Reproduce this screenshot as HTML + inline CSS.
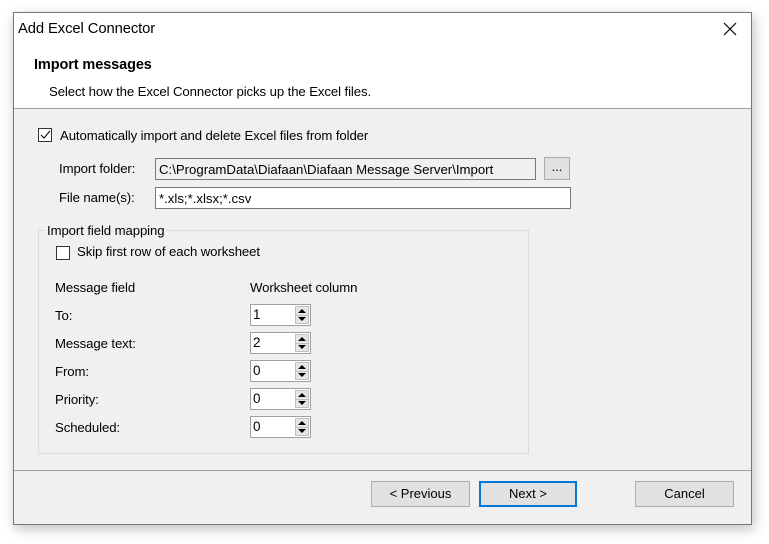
<!DOCTYPE html>
<html><head><style>
*{margin:0;padding:0;box-sizing:border-box}
body{width:769px;height:544px;background:#fff;font-family:"Liberation Sans",sans-serif;font-size:13.2px;color:#000;position:relative;overflow:hidden}
.win{position:absolute;left:13px;top:12px;width:739px;height:513px;border:1px solid #777;background:#f0f0f0;box-shadow:2px 4px 12px rgba(0,0,0,.25)}
.a{position:absolute;white-space:nowrap;letter-spacing:-0.1px}
.hdr{position:absolute;left:0;top:0;width:737px;height:96px;background:#fff;border-bottom:1px solid #a0a0a0}
.box{position:absolute;background:#fff;border:1px solid #7a7a7a;padding:3px 0 0 3px}
.btn{position:absolute;background:#e1e1e1;border:1px solid #adadad;text-align:center;line-height:24px;font-size:13px}
.spin{position:absolute;left:236px;width:61px;height:22px;background:#fff;border:1px solid #a0a0a0;font-size:13.5px;padding:2px 0 0 2px}
.spin .b{position:absolute;right:1px;top:1px;width:14px;height:18px;background:#e5e5e5;border:1px solid #c0c0c0}
.spin .b:before{content:"";position:absolute;left:2px;top:2px;border-left:4px solid transparent;border-right:4px solid transparent;border-bottom:4px solid #000}
.spin .b:after{content:"";position:absolute;left:2px;top:10px;border-left:4px solid transparent;border-right:4px solid transparent;border-top:4px solid #000}
.spin .b i{position:absolute;left:0;top:8px;width:12px;height:1px;background:#c0c0c0}
.cb{position:absolute;width:14px;height:14px;border:1px solid #333;background:#fff}
</style></head><body>
<div class="win">
<div class="hdr">
<div class="a" style="left:4px;top:8px;font-size:14.8px">Add Excel Connector</div>
<svg class="a" style="left:709px;top:9px" width="14" height="14"><path d="M1 1L13 13M13 1L1 13" stroke="#000" stroke-width="1.2"/></svg>
<div class="a" style="left:20px;top:44px;font-weight:bold;font-size:14.5px">Import messages</div>
<div class="a" style="left:35px;top:71px">Select how the Excel Connector picks up the Excel files.</div>
</div>
<div class="cb" style="left:24px;top:115px;border-color:#333"><svg width="12" height="12" style="position:absolute;left:0;top:0"><path d="M2 6L5 9L11 2" stroke="#000" fill="none" stroke-width="1"/></svg></div>
<div class="a" style="left:46px;top:115px">Automatically import and delete Excel files from folder</div>
<div class="a" style="left:45px;top:148px">Import folder:</div>
<div class="box" style="left:141px;top:145px;width:381px;height:22px;background:#f0f0f0">C:\ProgramData\Diafaan\Diafaan Message Server\Import</div>
<div class="btn" style="left:530px;top:144px;width:26px;height:23px;line-height:18px">...</div>
<div class="a" style="left:45px;top:177px">File name(s):</div>
<div class="box" style="left:141px;top:174px;width:416px;height:22px">*.xls;*.xlsx;*.csv</div>
<div style="position:absolute;left:24px;top:217px;width:491px;height:224px;border:1px solid #dcdcdc"></div>
<div class="a" style="left:31px;top:210px;background:#f0f0f0;padding:0 2px">Import field mapping</div>
<div class="cb" style="left:42px;top:233px"></div>
<div class="a" style="left:63px;top:231px">Skip first row of each worksheet</div>
<div class="a" style="left:41px;top:267px">Message field</div>
<div class="a" style="left:236px;top:267px">Worksheet column</div>
<div class="a" style="left:41px;top:295px">To:</div>
<div class="a" style="left:41px;top:323px">Message text:</div>
<div class="a" style="left:41px;top:351px">From:</div>
<div class="a" style="left:41px;top:379px">Priority:</div>
<div class="a" style="left:41px;top:407px">Scheduled:</div>
<div class="spin" style="top:291px">1<div class="b"><i></i></div></div>
<div class="spin" style="top:319px">2<div class="b"><i></i></div></div>
<div class="spin" style="top:347px">0<div class="b"><i></i></div></div>
<div class="spin" style="top:375px">0<div class="b"><i></i></div></div>
<div class="spin" style="top:403px">0<div class="b"><i></i></div></div>
<div style="position:absolute;left:0;top:457px;width:737px;height:1px;background:#a0a0a0"></div>
<div class="btn" style="left:357px;top:468px;width:99px;height:26px">&lt; Previous</div>
<div class="btn" style="left:465px;top:468px;width:98px;height:26px;border:2px solid #0078d7;line-height:22px">Next &gt;</div>
<div class="btn" style="left:621px;top:468px;width:99px;height:26px">Cancel</div>
</div>
</body></html>
